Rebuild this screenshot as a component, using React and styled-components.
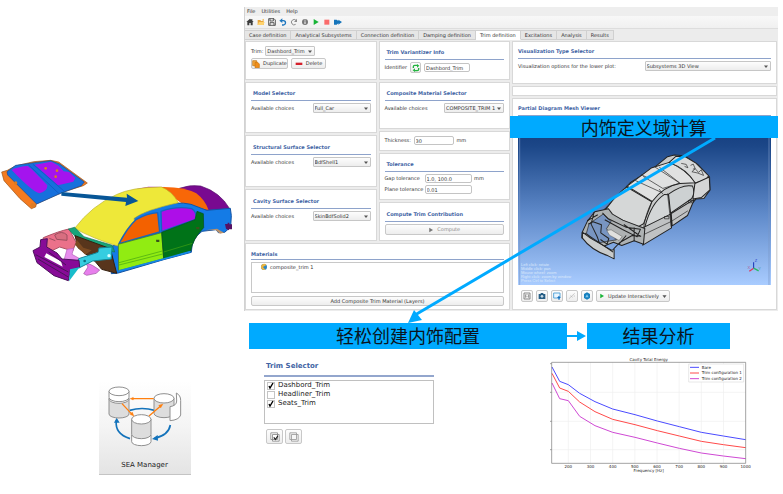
import React from "react";
import styled, { createGlobalStyle } from "styled-components";

const GlobalStyle = createGlobalStyle`
  *, *::before, *::after { box-sizing: border-box; }
  body { margin: 0; background: #fff; }
  button, input, select { font: inherit; color: inherit; margin: 0; }
  svg { display: block; flex-shrink: 0; }
`;

const accent = "#00aaff";
const heading = "#4264a4";

const Page = styled.main`
  display: grid;
  grid-template-columns: 244fr 539fr;
  font-family: "DejaVu Sans", "Noto Sans CJK SC", sans-serif;
  font-size: 5px;
  line-height: 7px;
  color: #333;
`;

/* ---------- Left column ---------- */
const Aside = styled.aside`
  display: flex;
  flex-direction: column;
  align-items: stretch;
  padding-top: 150px;
`;
const Drawing = styled.svg`
  width: 100%;
  height: auto;
`;
const ManagerTile = styled.button`
  align-self: center;
  margin: 91px 0 0 45px;
  width: 92px;
  padding: 4px 8px 3px;
  border: 0;
  border-bottom: 1px solid #c4c4c4;
  background: linear-gradient(#ffffff, #f4f4f4 50%, #e4e4e4);
  font-size: 7px;
  line-height: 11px;
  color: #222;
  display: flex;
  flex-direction: column;
  align-items: center;
  gap: 13px;
`;

/* ---------- Application window ---------- */
const Stage = styled.div`
  position: relative;
  padding-top: 7px;
`;
const Window = styled.section`
  margin-right: 5px;
  background: #ececec;
  border-left: 1px solid #d2d2d2;
`;
const MenuBar = styled.nav`
  display: flex;
  gap: 6px;
  padding: 1px 2px;
  background: #eeeeee;
`;
const MenuItem = styled.button`
  border: 0;
  padding: 0;
  background: none;
`;
const ToolBar = styled.div`
  display: flex;
  gap: 3px;
  padding: 2px 1px;
  background: linear-gradient(#f8f8f8, #f0f0f0);
  border-bottom: 1px solid #dddddd;
`;
const ToolButton = styled.button`
  border: 0;
  padding: 0;
  background: none;
  width: 8px;
  height: 8px;
`;
const TabBar = styled.div`
  display: flex;
  height: 11px;
  padding-top: 1px;
`;
const Tab = styled.button`
  border: 1px solid #d0d0d0;
  border-left: 0;
  border-bottom-color: ${(p) => (p.$active ? "#fff" : "#d0d0d0")};
  padding: 0 4px;
  background: ${(p) => (p.$active ? "#ffffff" : "#e6e6e6")};
  white-space: nowrap;
`;
const Body = styled.div`
  display: grid;
  grid-template-columns: 1fr 1fr;
  gap: 2px;
  padding: 1px 1px 1px 0;
`;
const Stack = styled.div`
  display: flex;
  flex-direction: column;
  gap: 2px;
  min-width: 0;
`;
const Pair = styled.div`
  display: grid;
  grid-template-columns: 1fr 1fr;
  gap: 2px;
`;
const Panel = styled.section`
  min-height: ${(p) => p.$min}px;
  padding: ${(p) => p.$top ?? 7}px 5px 0;
  background: #fff;
  border: 1px solid #d8d8d8;
  flex-grow: ${(p) => (p.$grow ? 1 : 0)};
`;
const Title = styled.h2`
  margin: 0 0 ${(p) => p.$after ?? 2}px;
  padding: 0 0 ${(p) => p.$under ?? 3}px ${(p) => p.$indent ?? 2}px;
  border-bottom: 1px solid #8ea3cb;
  font-size: 5px;
  line-height: 7px;
  color: ${heading};
  white-space: nowrap;
`;
const Row = styled.div`
  display: flex;
  align-items: center;
  gap: ${(p) => p.$gap ?? 3}px;
  margin-bottom: ${(p) => p.$after ?? 0}px;
  padding-left: ${(p) => p.$indent ?? 0}px;
  white-space: nowrap;
`;
const FieldLabel = styled.label`
  width: ${(p) => (p.$w ? `${p.$w}px` : "auto")};
  flex: none;
`;
const SelectBox = styled.span`
  display: grid;
  align-items: center;
  width: ${(p) => p.$w};
  margin-left: ${(p) => (p.$end ? "auto" : 0)};
  svg { grid-area: 1 / 1; justify-self: end; margin-right: 3px; width: 4px; height: 3px; pointer-events: none; }
  select {
    grid-area: 1 / 1;
    width: 100%;
    height: 10px;
    padding: 0 1px;
    appearance: none;
    border: 1px solid #c6c6c6;
    border-radius: 1px;
    background: linear-gradient(#fdfdfd, #ededed);
  }
`;
const TextInput = styled.input`
  width: ${(p) => p.$w}px;
  height: 9px;
  padding: 0 1px;
  border: 1px solid #c4c4c4;
  border-radius: 2px;
  background: #fff;
`;
const PushButton = styled.button`
  display: flex;
  align-items: center;
  justify-content: center;
  gap: 3px;
  width: ${(p) => p.$w ?? "auto"};
  height: ${(p) => p.$h ?? 11}px;
  padding: 0 ${(p) => p.$pad ?? 3}px;
  border: 1px solid #c8c8c8;
  border-radius: 2px;
  background: linear-gradient(#fdfdfd, #ededed);
  color: ${(p) => (p.disabled ? "#8c8c8c" : "inherit")};
  white-space: nowrap;
`;
const MaterialList = styled.ul`
  list-style: none;
  margin: 0 0 3px;
  padding: 0 8px;
  min-height: 31px;
  border: 1px solid #c8c8c8;
`;
const Material = styled.li`
  display: flex;
  align-items: center;
  gap: 2px;
`;
const Viewer = styled.figure`
  position: relative;
  margin: 0 0 5px;
  background: linear-gradient(#0d3675, #1c4788 18%, #5f8aca 58%, #a9ccff);
`;
const ViewerHints = styled.figcaption`
  position: absolute;
  left: 3px;
  bottom: 2px;
  font-family: "Liberation Sans", sans-serif;
  font-size: 4px;
  line-height: 4px;
  color: #dbe8fb;
`;

/* ---------- Workflow banners ---------- */
const Banner = styled.div`
  background: ${accent};
  color: #0a1420;
  font-family: "Noto Sans CJK SC", sans-serif;
  font-size: 18px;
  line-height: 24px;
  text-align: center;
  white-space: nowrap;
`;
const OverlayBanner = styled(Banner)`
  position: absolute;
  top: 116px;
  left: 49.3%;
  right: 5px;
  line-height: 22px;
`;
const OverlayArrow = styled.svg`
  position: absolute;
  top: 0;
  left: 0;
  width: 100%;
  height: 323px;
  pointer-events: none;
`;
const Flow = styled.div`
  display: grid;
  grid-template-columns: 318fr 20fr 143fr 53fr;
  align-items: center;
  padding-left: 5px;
  margin-top: 12px;
`;
const FlowBanner = styled(Banner)`
  padding-bottom: 2px;
`;

/* ---------- Results row ---------- */
const Results = styled.div`
  display: grid;
  grid-template-columns: 296fr 243fr;
`;
const TrimSelector = styled.form`
  padding: 12px 0 0 20px;
  width: 190px;
  font-size: 7px;
  line-height: 9px;
`;
const TrimTitle = styled.h2`
  margin: 0 0 3px;
  padding: 0 0 4px 2px;
  border-bottom: 2px solid #93a6cd;
  font-size: 7px;
  line-height: 10px;
  color: ${heading};
`;
const TrimList = styled.div`
  min-height: 44px;
  padding: 0 2px;
  border: 1px solid #c0c0c0;
`;
const TrimOption = styled.label`
  display: flex;
  align-items: center;
  gap: 3px;
  color: #222;
`;
const CheckHolder = styled.span`
  display: grid;
  width: 8px;
  height: 8px;
  input {
    grid-area: 1 / 1;
    appearance: none;
    width: 8px;
    height: 8px;
    border: 1px solid #c4c4c4;
    background: #fff;
  }
  svg { grid-area: 1 / 1; width: 8px; height: 8px; visibility: hidden; pointer-events: none; }
  input:checked + svg { visibility: visible; }
`;
const Actions = styled.div`
  display: flex;
  gap: 2px;
  padding: 5px 2px 0;
`;
const SquareButton = styled(PushButton)`
  width: 17px;
  padding: 0;
`;

/* ---------- Icons ---------- */
const Icon = ({ size = 8, children }) => (
  <svg width={size} height={size} viewBox="0 0 24 24" fill="none" aria-hidden="true">{children}</svg>
);
const PlayIcon = ({ color = "#18b436", size = 8 }) => (
  <Icon size={size}><path d="M5 3 20 12 5 21Z" fill={color} /></Icon>
);
const CopyIcon = () => (
  <Icon>
    <path d="M2 2h12v15H2Z" fill="#f3a63a" stroke="#b96f11" strokeWidth="2" />
    <path d="M9 7h8l5 5v11H9Z" fill="#f08e1b" stroke="#c7760f" strokeWidth="2" />
  </Icon>
);

const tools = [
  ["Home", <path d="M12 2 1 12h3v10h6v-7h4v7h6V12h3L19 8V3h-3v3Z" fill="#3c3c3c" />],
  ["Open", <g><path d="M2 21V6h8l2 3h8v12Z" fill="#e9a53a" /><path d="M2 21 6 12h17l-4 9Z" fill="#ffd36d" /><path d="m14 6 7-4-1 7Z" fill="#f3b94f" /></g>],
  ["Save", <g stroke="#454545" strokeWidth="2.6"><path d="M2 2h16l4 4v16H2Z" /><path d="M6 2v7h10V2M6 22v-8h12v8" /></g>],
  ["Undo", <g><path d="M8 8h5a6 6 0 0 1 0 13H9" stroke="#1c76be" strokeWidth="4" /><path d="M1 8 10 1v14Z" fill="#1c76be" /></g>],
  ["Redo", <g><path d="M17 19a8 8 0 1 1 1-12" stroke="#8b8b8b" strokeWidth="3" /><path d="M21 2v10h-9Z" fill="#8b8b8b" /></g>],
  ["Information", <g><circle cx="12" cy="12" r="9" fill="#777" /><path d="M12 10v8M12 5v3" stroke="#fff" strokeWidth="3" /></g>],
  ["Run", <path d="M5 3 20 12 5 21Z" fill="#18b436" />],
  ["Stop", <path d="M4 5h15v15H4Z" fill="#fa6b6b" />],
  ["Continue", <path d="M0 5h8l5 4V5l11 7-11 8v-4l-5 4H0Z" fill="#1675bb" />],
];

const Choice = ({ id, options, w = "58px", end = true }) => (
  <SelectBox $w={w} $end={end}>
    <select id={id} defaultValue={options[0]}>
      {options.map((o) => <option key={o}>{o}</option>)}
    </select>
    <svg viewBox="0 0 8 6" aria-hidden="true"><path d="M0 1h8L4 6Z" fill="#555" /></svg>
  </SelectBox>
);

const ChoicePanel = ({ id, title, value, min, top, w }) => (
  <Panel $min={min} $top={top}>
    <Title>{title}</Title>
    <Row>
      <FieldLabel htmlFor={id}>Available choices</FieldLabel>
      <Choice id={id} options={[value]} w={w} />
    </Row>
  </Panel>
);

/* ---------- Drawings ---------- */
const CarDrawing = () => (
  <Drawing viewBox="0 0 732 420" role="img" aria-label="Car body coloured by subsystem">
    <g strokeLinejoin="round">
      <path d="M5 66 22 61 46 48 101 35 152 31 176 36 262 99 250 107 184 128 109 162 107 171 94 176 60 146 12 92Z" fill="#f47b20" stroke="#9a5416" strokeWidth="2" />
      <path d="M21 65 47 46 103 38 152 32 179 42 253 96 244 107 184 129 110 162 23 75Z" fill="#1670dc" stroke="#174a91" strokeWidth="2" />
      <path d="M35 60Q56 49 84 48L100 62 142 106Q143 124 118 130 97 125 35 60Z" fill="#a414ee" />
      <path d="M104 44 154 35 176 47 191 64 207 66 226 84 220 95 174 106Z" fill="#a414ee" />
      <path d="M85 44 178 132M99 43 193 124" stroke="#0d55b8" strokeWidth="2" fill="none" />
      <g fill="#dc7b23"><circle cx="137" cy="55" r="4" /><circle cx="171" cy="62" r="4" /><circle cx="167" cy="80" r="4" /><circle cx="47" cy="99" r="5" /><circle cx="98" cy="166" r="7" /></g>

      <path d="M320 155Q380 118 445 110L500 111 390 130Z" fill="#b115ce" />
      <path d="M538 115Q570 103 602 108 660 126 689 176L650 186 618 184Z" fill="#790a90" stroke="#54116a" strokeWidth="2" />
      <path d="M474 111Q550 108 589 130 616 151 626 181L545 160Z" fill="#f86708" />
      <path d="M334 371 333 292 355 277Q382 219 403 204 432 183 475 168 530 153 573 163L620 181 691 175 694 197 692 231 674 247 655 248 648 239 606 244Q574 266 574 307L491 329 355 369Z" fill="#147be6" stroke="#1553a2" strokeWidth="3" />
      <path d="M615 241 651 236 672 248 660 251 647 240Z" fill="#bc936b" />
      <path d="M675 222h8v-4h5v5h8v15h-9v3l-9-5Z" fill="#551164" />
      <path d="M224 235Q275 167 349 134 393 112 484 111 516 123 535 158 434 180 402 205L403 213Q376 236 353 288Q279 266 224 235Z" fill="#eee839" stroke="#bbb42c" strokeWidth="2" />
      <path d="M357 281Q384 230 408 209 442 190 473 188L479 246Z" fill="#f36100" stroke="#1665c0" strokeWidth="4" />
      <path d="M483 184Q530 167 575 176 592 186 587 208L485 244Z" fill="#ad0ee8" stroke="#1665c0" strokeWidth="4" />
      <path d="M355 283 485 248 491 326 356 362Z" fill="#91ec12" stroke="#477719" strokeWidth="2" />
      <path d="M485 247 585 209 591 184 610 191 611 233Q579 265 572 303L491 327Z" fill="#007318" stroke="#064d17" strokeWidth="2" />
      <path d="m357 338 130-35M357 345 488 312M491 306 577 280" stroke="#42a312" strokeWidth="2" fill="none" />
      <path d="m356 363 135-36 80-22" stroke="#1488e8" strokeWidth="5" fill="none" />
      <path d="M468 269h10v7h-9ZM588 231h10v7h-9Z" fill="#39521c" />

      <path d="M130 263Q178 243 207 237L228 277 218 303 179 291 147 306 125 291Z" fill="#eb718a" stroke="#ae5265" strokeWidth="3" />
      <path d="m148 265 18 7M164 255q22-15 37 0v16l-31-3Z" stroke="#9d5060" strokeWidth="3" fill="#d86e80" />
      <path d="M205 237 224 232 252 260 337 286 344 306 280 292 240 275Z" fill="#17a47a" stroke="#147155" strokeWidth="2" />
      <path d="M225 257 331 296 350 370 305 358 286 335 234 293Z" fill="#58351c" stroke="#34200f" strokeWidth="3" />
      <path d="M230 269 250 293 275 301 256 314 225 285Z" fill="#7b4a22" />
      <path d="m201 298 20-3-5 18 25 14-17 12-32-9Z" fill="#e68cec" stroke="#b45db9" strokeWidth="2" />
      <path d="m251 371 13-20-7-13 20 8 22 14-10 10-29 6Z" fill="#e77fec" stroke="#9c4e9f" strokeWidth="2" />
      <path d="m236 326 58-19 3-13 39-3-2 36-56 6-41 21-10-4Z" fill="#35cde0" stroke="#128799" strokeWidth="3" />
      <path d="M99 302 120 291 122 269 142 266 140 291 171 309 186 327 237 331 239 351 211 360 205 392 162 377 111 338Z" fill="#870b97" stroke="#4c125c" strokeWidth="3" />
      <path d="m139 310 44 24 5 16-55-29Z" fill="#fff" />
      <path d="m107 314 98 52M114 327l91 54M146 306l52 39" stroke="#4a145a" strokeWidth="3" fill="none" />
      <path d="m210 358 29-7-32 43Z" fill="#19bccb" />
      <circle cx="327" cy="317" r="5" fill="#d3ffff" /><circle cx="254" cy="333" r="4" fill="#087482" />
    </g>
    <path d="m184 126 197 17-1-12 35 22-39 15 2-12-194-19Z" fill="#075697" />
  </Drawing>
);

const ViewerDrawing = () => (
  <Drawing viewBox="24 -48 758 507" role="img" aria-label="Car body mesh in three dimensions">
    <path d="M29-48V459M776-48V459" stroke="#7997c5" strokeWidth="2" />
    <g stroke="#222" strokeWidth="3" strokeLinejoin="round" fill="#d7d9d9">
      <path d="m288 227 72-75 70-44 42-34 20-5 30 2 40 26 36 38 1 39-18 25-24 2-30 35-131 91-35-13-102-61Z" fill="#c8caca" />
      <path d="M350 165Q325 180 289 229L306 251 382 285 400 275 425 209Z" fill="#d5d7d7" />
      <path d="m351 162 72-54 54-17q48 19 79 61L509 154q-49 8-83 54Z" fill="#e0e1e1" />
      <path d="m399 133 59 36 51-16-62-48M375 145l79 36M433 104l74 48M447 171l11 15M393 128l18 8" fill="none" strokeWidth="2" />
      <path d="m477 91 20-18 26 0 34 20 38 38-8 12-32 10Q530 111 477 91Z" fill="#d8dada" />
      <path d="m513 94 15 3 5 10-10-4M541 100l8-4 6 14-7 1M545 119l10-9 10 11 8-8 7 17-17-7Z" fill="none" strokeWidth="2" />
      <path d="M404 285q19-73 59-98l12 1 8 63-76 33Z" fill="#d3d6d7" />
      <path d="M475 186q43-31 72-24 9 20-3 38l-63 43Z" fill="#cdd1d2" />
      <path d="M402 285 481 246 484 287 398 339ZM483 244 552 202 532 250 486 281Z" fill="#c0c2c3" />
      <path d="m401 307 82-39 50-32M425 209q-19 36-25 80M472 184l11 100M463 253h13v7h-13ZM535 205h10v7h-10Z" fill="none" strokeWidth="2" />
      <path d="m554 154 43-19 2 38-25 23-26 5Z" fill="#d5d6d6" />
      <path d="m216 301 16-34 22-28 41-9 12 16 31 18 66 25-4 47-28-10-37 14-25-10-44 18-51-31Z" fill="#aeb2b3" />
      <path d="m237 275 42-29 24 22-14 22 30 33-61 10-29-30Z" fill="#7895c2" strokeWidth="2" />
      <path d="m217 300 24 18 63 36 8-2v28l-18-9q-51-17-77-53Z" fill="#c9cbcb" />
      <path d="m234 276 15-7 25 9-2 24 24 17-5 17-20-14M277 242l16 17 54 26 44 6-10 23-44-22-53-29M231 266l32-18M225 303l84 57M310 351l19-20 37-21 27 2M341 277l51 36M348 310l-22 27M252 240l-9 36 18 37 7 19M372 286v41" fill="none" />
      <path d="m290 295 13-2 33 20-9 12-29-16Z" fill="#e0e1df" strokeWidth="1" />
    </g>
    <path d="M730 390v18" stroke="#1632b4" strokeWidth="3" fill="none" />
    <path d="m717 417 13-9" stroke="#dd385f" strokeWidth="4" /><path d="m730 408 15 8" stroke="#25b967" strokeWidth="4" />
    <g fontSize="12" fontFamily="Liberation Sans"><text x="733" y="389" fill="#2545c7">Z</text><text x="744" y="413" fill="#4a9b91">Y</text><text x="712" y="411" fill="#ad5c98">X</text></g>
  </Drawing>
);

const ManagerDrawing = () => (
  <svg width="76" height="62" viewBox="50 30 228 186" aria-hidden="true">
    <g fill="none" stroke="#1473bb" strokeWidth="5">
      <path d="M118 106Q155 95 193 106M78 137Q73 177 119 191M240 150Q235 180 193 190" />
    </g>
    <path d="m71 143 8-15 9 15ZM202 180l-17 12 18 5Z" fill="#1473bb" />
    <g fill="#dddddd" stroke="#909090" strokeWidth="3">
      <path d="M56 70v47a30 12 0 0 0 60 0V70Z" /><ellipse cx="86" cy="72" rx="30" ry="13" fill="#fff" />
      <path d="M56 49v18a30 13 0 0 0 60 0V49Z" fill="#fff" /><ellipse cx="86" cy="49" rx="30" ry="13" fill="#fff" />
      <path d="M191 70v45a30 13 0 0 0 60 0V70Z" /><ellipse cx="221" cy="70" rx="30" ry="14" fill="#fff" />
      <path d="M258 54q13 7 13 22v44q-5 15-32 17V95q20-3 20-17Z" fill="#fff" />
      <path d="M124 180v20a29 12 0 0 0 58 0v-20Z" fill="#fff" />
      <path d="M124 132v46a29 13 0 0 0 58 0v-46Z" /><ellipse cx="153" cy="133" rx="29" ry="14" fill="#fff" />
    </g>
    <g stroke="#ff7f0e" strokeWidth="4" fill="#ff7f0e"><path d="M190 71h-64M95 86l28 30M176 123l34-29" /><path d="m119 71 10-4v8ZM131 124l-5-13-7 7ZM218 87l-13 4 6 8Z" strokeWidth="1" /></g>
  </svg>
);

const freq = [200, 300, 400, 500, 600, 700, 800, 900, 1000];
const series = [
  ["Bare", "#4b4bff", "36,156 59,199 85,209 119,235 165,260 218,282 285,299 352,318 418,335 484,352 550,363 617,374"],
  ["Trim configuration 1", "#ff4a4a", "36,175 59,219 85,229 119,261 165,290 218,313 285,329 352,347 418,363 484,379 550,389 617,398"],
  ["Trim configuration 2", "#cf49d4", "36,204 59,251 85,257 119,304 165,332 218,352 285,367 352,384 418,400 484,414 550,423 617,431"],
];
const EnergyChart = () => (
  <Drawing viewBox="0 102 729 390" role="img" aria-label="Cavity Total Energy" fontFamily="DejaVu Sans, sans-serif">
    <text x="326" y="137" fontSize="12" textAnchor="middle" fill="#222">Cavity Total Energy</text>
    <g stroke="#eeeeee" strokeWidth="2">
      {freq.slice(0, -1).map((f, i) => <path key={f} d={`M${85 + i * 66.5} 142V445`} />)}
      <path d="M35 232H617M35 319H617M35 404H617" />
    </g>
    {series.map(([name, color, points]) => (
      <polyline key={name} points={points} fill="none" stroke={color} strokeWidth="3" strokeLinejoin="round" />
    ))}
    <path d="M35 142H617V445H35Z" fill="none" stroke="#777" strokeWidth="2" />
    <path d="M30 146h5M30 232h5M30 319h5M30 404h5" stroke="#777" strokeWidth="2" />
    <g fontSize="12" textAnchor="middle" fill="#222">
      {freq.map((f, i) => <text key={f} x={85 + i * 66.5} y="459">{f}</text>)}
      <text x="326" y="472">Frequency [Hz]</text>
    </g>
    <path d="M446 147H611V201H446Z" fill="#fff" stroke="#dddddd" strokeWidth="2" />
    {series.map(([name, color], i) => (
      <g key={name}>
        <path d={`M450 ${157 + i * 17}h27`} stroke={color} strokeWidth="3" />
        <text x="485" y={161 + i * 17} fontSize="12" fill="#222">{name}</text>
      </g>
    ))}
  </Drawing>
);

const viewerTools = [
  ["Show scale", <path d="M3 3h18v18H3ZM8 7v10M12 7v2m0 3v2M17 7v10" stroke="#777" strokeWidth="2.5" />],
  ["Take picture", <g><path d="M2 6h5l2-3h6l2 3h5v15H2Z" fill="#285f86" /><circle cx="12" cy="13" r="4" fill="#c9dae5" /></g>],
  ["Export view", <g><path d="M2 3h19v15H2Z" fill="#eaf6ff" stroke="#5ba7da" strokeWidth="3" /><path d="m12 18 6-7 5 7h-3v5h-4v-5Z" fill="#1470bc" /></g>],
  ["Measure", <path d="m3 20 17-16M7 11l7 5M17 12h4" stroke="#b2b2b2" strokeWidth="2" />],
  ["Change view", <g><path d="m12 1 9 5v12l-9 5-9-5V6Z" fill="#1680be" /><path d="m12 7 5 9H7Z" fill="#82c6ec" /></g>],
];
const tabs = ["Case definition", "Analytical Subsystems", "Connection definition", "Damping definition", "Trim definition", "Excitations", "Analysis", "Results"];

export default function App() {
  return (
    <Page>
      <GlobalStyle />
      <Aside>
        <CarDrawing />
        <ManagerTile type="button"><ManagerDrawing />SEA Manager</ManagerTile>
      </Aside>

      <Stage>
        <Window>
          <MenuBar>
            {["File", "Utilities", "Help"].map((m) => <MenuItem key={m} type="button">{m}</MenuItem>)}
          </MenuBar>
          <ToolBar>
            {tools.map(([name, shape]) => (
              <ToolButton key={name} type="button" aria-label={name}><Icon>{shape}</Icon></ToolButton>
            ))}
          </ToolBar>
          <TabBar role="tablist">
            {tabs.map((t) => (
              <Tab key={t} type="button" role="tab" aria-selected={t === "Trim definition"} $active={t === "Trim definition"}>{t}</Tab>
            ))}
          </TabBar>
          <Body>
            <Stack>
              <Pair>
                <Stack>
                  <Panel $min={39} $top={4}>
                    <Row $after={2} $gap={2}>
                      <FieldLabel htmlFor="trim">Trim:</FieldLabel>
                      <Choice id="trim" options={["Dashbord_Trim"]} w="50px" end={false} />
                    </Row>
                    <Row>
                      <PushButton type="button" $pad={1} $w="37px"><CopyIcon />Duplicate</PushButton>
                      <PushButton type="button" $pad={1} $w="35px">
                        <Icon><path d="M2 8h20v7H2Z" fill="#d5202b" /></Icon>Delete
                      </PushButton>
                    </Row>
                  </Panel>
                  <ChoicePanel id="model" title="Model Selector" value="Full_Car" min={51} />
                  <ChoicePanel id="surface" title="Structural Surface Selector" value="BdfShell1" min={52} top={8} />
                  <ChoicePanel id="cavity" title="Cavity Surface Selector" value="SkinBdfSolid2" min={52} top={8} />
                </Stack>
                <Stack>
                  <Panel $min={39}>
                    <Title>Trim Variantizer Info</Title>
                    <Row>
                      <FieldLabel htmlFor="identifier">Identifier</FieldLabel>
                      <PushButton type="button" aria-label="Refresh identifier" $w="11px" $pad={0}>
                        <Icon>
                          <path d="M4 12V8a4 4 0 0 1 4-4h8M20 12v4a4 4 0 0 1-4 4H8" stroke="#23b43f" strokeWidth="4" />
                          <path d="m15 0 7 5-7 6ZM9 13l-7 6 7 5Z" fill="#23b43f" />
                        </Icon>
                      </PushButton>
                      <TextInput id="identifier" $w={46} defaultValue="Dashbord_Trim" />
                    </Row>
                  </Panel>
                  <ChoicePanel id="composite" title="Composite Material Selector" value="COMPOSITE_TRIM 1" min={47} w="60px" />
                  <Panel $min={20} $top={4}>
                    <Row>
                      <FieldLabel htmlFor="thickness" $w={26}>Thickness:</FieldLabel>
                      <TextInput id="thickness" $w={40} defaultValue="30" />
                      mm
                    </Row>
                  </Panel>
                  <Panel $min={47}>
                    <Title>Tolerance</Title>
                    <Row $gap={1} $after={2}>
                      <FieldLabel htmlFor="gap" $w={39}>Gap tolerance</FieldLabel>
                      <TextInput id="gap" $w={47} defaultValue="1.0, 100.0" />
                      <FieldLabel as="span">&nbsp;mm</FieldLabel>
                    </Row>
                    <Row $gap={1}>
                      <FieldLabel htmlFor="plane" $w={39}>Plane tolerance</FieldLabel>
                      <TextInput id="plane" $w={47} defaultValue="0.01" />
                    </Row>
                  </Panel>
                  <Panel $min={39} $top={8}>
                    <Title>Compute Trim Contribution</Title>
                    <PushButton type="button" disabled $w="100%">
                      <PlayIcon color="#777" size={6} />Compute
                    </PushButton>
                  </Panel>
                </Stack>
              </Pair>
              <Panel $min={67} $top={7}>
                <Title $indent={0} $under={1}>Materials</Title>
                <MaterialList>
                  <Material>
                    <Icon>
                      <circle cx="12" cy="12" r="9" fill="#2c85c3" />
                      <path d="M3 12a9 9 0 0 1 16-6L9 12l7 8A9 9 0 0 1 3 12Z" fill="#edb53e" />
                    </Icon>
                    composite_trim 1
                  </Material>
                </MaterialList>
                <PushButton type="button" $w="100%" $h={10}>Add Composite Trim Material (Layers)</PushButton>
              </Panel>
            </Stack>

            <Stack>
              <Panel $min={43} $top={6}>
                <Title $indent={0}>Visualization Type Selector</Title>
                <Row>
                  <FieldLabel htmlFor="view">Visualization options for the lower plot:</FieldLabel>
                  <Choice id="view" options={["Subsystems 3D View"]} w="50%" />
                </Row>
              </Panel>
              <Panel $min={10} $top={0} />
              <Panel $min={212} $top={6} $grow>
                <Title $indent={0} $after={0}>Partial Diagram Mesh Viewer</Title>
                <Viewer>
                  <ViewerDrawing />
                  <ViewerHints>
                    Left click: rotate<br />Middle click: pan<br />Mouse wheel: zoom<br />Right click: zoom by window<br />Press Ctrl to Select
                  </ViewerHints>
                </Viewer>
                <Row $indent={3}>
                  {viewerTools.map(([name, shape]) => (
                    <PushButton key={name} type="button" aria-label={name} $w="12px" $h={12} $pad={0}><Icon>{shape}</Icon></PushButton>
                  ))}
                  <PushButton type="button" $h={12} $pad={2}>
                    <PlayIcon size={6} />Update Interactively
                    <Icon size={5}><path d="M2 6h20L12 19Z" fill="#555" /></Icon>
                  </PushButton>
                </Row>
              </Panel>
            </Stack>
          </Body>
        </Window>

        <OverlayArrow viewBox="0 0 539 323" preserveAspectRatio="none" aria-hidden="true">
          <path d="M471 138 171 315" stroke={accent} strokeWidth="3" />
          <path d="m164 323 6-13 8 10Z" fill={accent} />
        </OverlayArrow>
        <OverlayBanner>内饰定义域计算</OverlayBanner>

        <Flow>
          <FlowBanner>轻松创建内饰配置</FlowBanner>
          <Drawing viewBox="0 0 20 12" aria-hidden="true">
            <path d="M0 5h10V1l9 5-9 5V7H0Z" fill={accent} />
          </Drawing>
          <FlowBanner>结果分析</FlowBanner>
        </Flow>

        <Results>
          <TrimSelector>
            <TrimTitle>Trim Selector</TrimTitle>
            <TrimList>
              {[["Dashbord_Trim", true], ["Headliner_Trim", false], ["Seats_Trim", true]].map(([name, on]) => (
                <TrimOption key={name}>
                  <CheckHolder>
                    <input type="checkbox" defaultChecked={on} />
                    <svg viewBox="0 0 8 8" aria-hidden="true"><path d="m2 4 1 2 3-5" stroke="#000" strokeWidth="1.4" fill="none" /></svg>
                  </CheckHolder>
                  {name}
                </TrimOption>
              ))}
            </TrimList>
            <Actions>
              <SquareButton type="button" aria-label="Select all" $h={15}>
                <Icon size={10}><path d="M2 2h16v16H2ZM6 6h16v16H6Z" stroke="#888" strokeWidth="2" fill="#fff" /><path d="m9 13 4 5 6-9" stroke="#222" strokeWidth="3" /></Icon>
              </SquareButton>
              <SquareButton type="button" aria-label="Clear selection" $h={15}>
                <Icon size={10}><path d="M2 2h16v16H2ZM6 6h16v16H6Z" stroke="#999" strokeWidth="2" fill="#f6f6f6" /></Icon>
              </SquareButton>
            </Actions>
          </TrimSelector>
          <EnergyChart />
        </Results>
      </Stage>
    </Page>
  );
}
